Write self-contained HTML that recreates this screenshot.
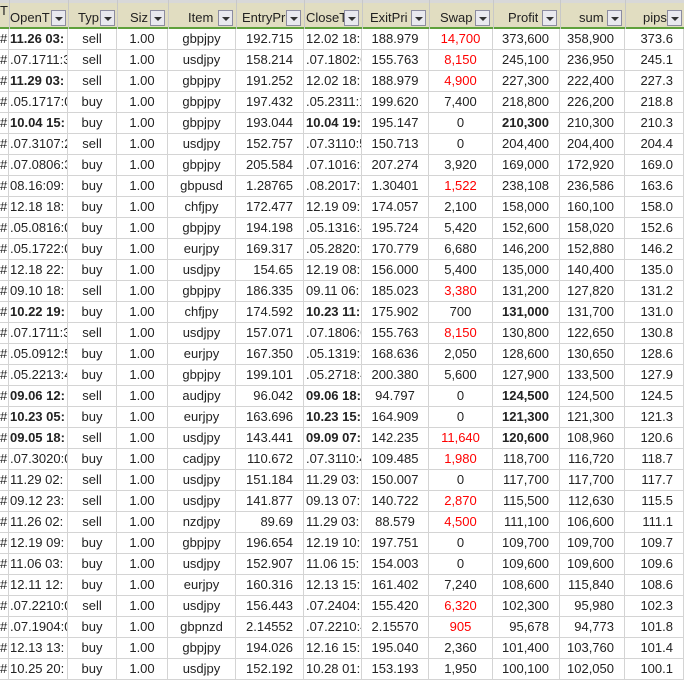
<!DOCTYPE html>
<html><head><meta charset="utf-8"><style>
body{margin:0;background:#fff;width:684px;height:678px;overflow:hidden;font-family:"Liberation Sans",sans-serif;font-size:13px;color:#222}
.g{display:grid;grid-template-columns:9px 59px 49px 51px 68px 68px 58px 67px 64px 67px 65px 59px;width:684px}
.g div{box-sizing:border-box;height:21px;line-height:20px;border-right:1px solid #d4d4d4;border-bottom:1px solid #d4d4d4;overflow:hidden;white-space:nowrap;padding:0 2px}
.g div.o{padding:0 0 0 1px}
.g div.h0{padding:0;text-align:left}
.c{text-align:center}.r{text-align:right;padding-right:10px!important}.l{text-align:left}
.red{color:#f00}.b{font-weight:bold}
.hd{position:relative;height:29px;background:#e1ddc1;border-top:3px solid #d8d8d8;box-sizing:border-box;border-bottom:2px solid #5fa03c}
.hd span{position:absolute;top:7px;font-size:13px;color:#222;white-space:nowrap;overflow:hidden}
.bt{position:absolute;top:7px;width:15px;height:16px;background:#e9e9ef;border:1px solid #8c8ca0;box-sizing:border-box}
.bt:after{content:"";position:absolute;left:3px;top:6px;border-left:4px solid transparent;border-right:4px solid transparent;border-top:4px solid #333}
.vl{position:absolute;top:-3px;bottom:-2px;width:1px;background:#c8c8c8}
</style></head><body>
<div class="hd">
<div class="vl" style="left:9px"></div><div class="vl" style="left:68px"></div><div class="vl" style="left:117px"></div><div class="vl" style="left:168px"></div><div class="vl" style="left:236px"></div><div class="vl" style="left:304px"></div><div class="vl" style="left:362px"></div><div class="vl" style="left:429px"></div><div class="vl" style="left:493px"></div><div class="vl" style="left:560px"></div><div class="vl" style="left:625px"></div>
<span style="left:0;top:0px;width:9px">T</span>
<span style="left:10px;width:42px">OpenT</span><div class="bt" style="left:51px"></div>
<span style="left:78px">Typ</span><div class="bt" style="left:100px"></div>
<span style="left:130px">Siz</span><div class="bt" style="left:150px"></div>
<span style="left:188px">Item</span><div class="bt" style="left:218px"></div>
<span style="left:242px;width:44px">EntryPri</span><div class="bt" style="left:286px"></div>
<span style="left:306px;width:38px">CloseT</span><div class="bt" style="left:344px"></div>
<span style="left:370px;width:41px">ExitPri</span><div class="bt" style="left:411px"></div>
<span style="left:440px;width:35px">Swap</span><div class="bt" style="left:475px"></div>
<span style="left:508px">Profit</span><div class="bt" style="left:542px"></div>
<span style="left:579px">sum</span><div class="bt" style="left:607px"></div>
<span style="left:643px">pips</span><div class="bt" style="left:667px"></div>
</div>
<div class="g" id="g">
<div class="h0">#</div><div class="o b">11.26 03:</div><div class="c">sell</div><div class="c">1.00</div><div class="c">gbpjpy</div><div class="r">192.715</div><div class="l">12.02 18:</div><div class="c">188.979</div><div class="c red">14,700</div><div class="r">373,600</div><div class="r">358,900</div><div class="r">373.6</div>
<div class="h0">#</div><div class="o">.07.1711:3</div><div class="c">sell</div><div class="c">1.00</div><div class="c">usdjpy</div><div class="r">158.214</div><div class="l">.07.1802:0</div><div class="c">155.763</div><div class="c red">8,150</div><div class="r">245,100</div><div class="r">236,950</div><div class="r">245.1</div>
<div class="h0">#</div><div class="o b">11.29 03:</div><div class="c">sell</div><div class="c">1.00</div><div class="c">gbpjpy</div><div class="r">191.252</div><div class="l">12.02 18:</div><div class="c">188.979</div><div class="c red">4,900</div><div class="r">227,300</div><div class="r">222,400</div><div class="r">227.3</div>
<div class="h0">#</div><div class="o">.05.1717:0</div><div class="c">buy</div><div class="c">1.00</div><div class="c">gbpjpy</div><div class="r">197.432</div><div class="l">.05.2311:1</div><div class="c">199.620</div><div class="c">7,400</div><div class="r">218,800</div><div class="r">226,200</div><div class="r">218.8</div>
<div class="h0">#</div><div class="o b">10.04 15:</div><div class="c">buy</div><div class="c">1.00</div><div class="c">gbpjpy</div><div class="r">193.044</div><div class="l b">10.04 19:</div><div class="c">195.147</div><div class="c">0</div><div class="r b">210,300</div><div class="r">210,300</div><div class="r">210.3</div>
<div class="h0">#</div><div class="o">.07.3107:2</div><div class="c">sell</div><div class="c">1.00</div><div class="c">usdjpy</div><div class="r">152.757</div><div class="l">.07.3110:5</div><div class="c">150.713</div><div class="c">0</div><div class="r">204,400</div><div class="r">204,400</div><div class="r">204.4</div>
<div class="h0">#</div><div class="o">.07.0806:3</div><div class="c">buy</div><div class="c">1.00</div><div class="c">gbpjpy</div><div class="r">205.584</div><div class="l">.07.1016:3</div><div class="c">207.274</div><div class="c">3,920</div><div class="r">169,000</div><div class="r">172,920</div><div class="r">169.0</div>
<div class="h0">#</div><div class="o">08.16:09:</div><div class="c">buy</div><div class="c">1.00</div><div class="c">gbpusd</div><div class="r">1.28765</div><div class="l">.08.2017:5</div><div class="c">1.30401</div><div class="c red">1,522</div><div class="r">238,108</div><div class="r">236,586</div><div class="r">163.6</div>
<div class="h0">#</div><div class="o">12.18 18:</div><div class="c">buy</div><div class="c">1.00</div><div class="c">chfjpy</div><div class="r">172.477</div><div class="l">12.19 09:</div><div class="c">174.057</div><div class="c">2,100</div><div class="r">158,000</div><div class="r">160,100</div><div class="r">158.0</div>
<div class="h0">#</div><div class="o">.05.0816:0</div><div class="c">buy</div><div class="c">1.00</div><div class="c">gbpjpy</div><div class="r">194.198</div><div class="l">.05.1316:4</div><div class="c">195.724</div><div class="c">5,420</div><div class="r">152,600</div><div class="r">158,020</div><div class="r">152.6</div>
<div class="h0">#</div><div class="o">.05.1722:0</div><div class="c">buy</div><div class="c">1.00</div><div class="c">eurjpy</div><div class="r">169.317</div><div class="l">.05.2820:3</div><div class="c">170.779</div><div class="c">6,680</div><div class="r">146,200</div><div class="r">152,880</div><div class="r">146.2</div>
<div class="h0">#</div><div class="o">12.18 22:</div><div class="c">buy</div><div class="c">1.00</div><div class="c">usdjpy</div><div class="r">154.65</div><div class="l">12.19 08:</div><div class="c">156.000</div><div class="c">5,400</div><div class="r">135,000</div><div class="r">140,400</div><div class="r">135.0</div>
<div class="h0">#</div><div class="o">09.10 18:</div><div class="c">sell</div><div class="c">1.00</div><div class="c">gbpjpy</div><div class="r">186.335</div><div class="l">09.11 06:</div><div class="c">185.023</div><div class="c red">3,380</div><div class="r">131,200</div><div class="r">127,820</div><div class="r">131.2</div>
<div class="h0">#</div><div class="o b">10.22 19:</div><div class="c">buy</div><div class="c">1.00</div><div class="c">chfjpy</div><div class="r">174.592</div><div class="l b">10.23 11:</div><div class="c">175.902</div><div class="c">700</div><div class="r b">131,000</div><div class="r">131,700</div><div class="r">131.0</div>
<div class="h0">#</div><div class="o">.07.1711:3</div><div class="c">sell</div><div class="c">1.00</div><div class="c">usdjpy</div><div class="r">157.071</div><div class="l">.07.1806:0</div><div class="c">155.763</div><div class="c red">8,150</div><div class="r">130,800</div><div class="r">122,650</div><div class="r">130.8</div>
<div class="h0">#</div><div class="o">.05.0912:5</div><div class="c">buy</div><div class="c">1.00</div><div class="c">eurjpy</div><div class="r">167.350</div><div class="l">.05.1319:3</div><div class="c">168.636</div><div class="c">2,050</div><div class="r">128,600</div><div class="r">130,650</div><div class="r">128.6</div>
<div class="h0">#</div><div class="o">.05.2213:4</div><div class="c">buy</div><div class="c">1.00</div><div class="c">gbpjpy</div><div class="r">199.101</div><div class="l">.05.2718:4</div><div class="c">200.380</div><div class="c">5,600</div><div class="r">127,900</div><div class="r">133,500</div><div class="r">127.9</div>
<div class="h0">#</div><div class="o b">09.06 12:</div><div class="c">sell</div><div class="c">1.00</div><div class="c">audjpy</div><div class="r">96.042</div><div class="l b">09.06 18:</div><div class="c">94.797</div><div class="c">0</div><div class="r b">124,500</div><div class="r">124,500</div><div class="r">124.5</div>
<div class="h0">#</div><div class="o b">10.23 05:</div><div class="c">buy</div><div class="c">1.00</div><div class="c">eurjpy</div><div class="r">163.696</div><div class="l b">10.23 15:</div><div class="c">164.909</div><div class="c">0</div><div class="r b">121,300</div><div class="r">121,300</div><div class="r">121.3</div>
<div class="h0">#</div><div class="o b">09.05 18:</div><div class="c">sell</div><div class="c">1.00</div><div class="c">usdjpy</div><div class="r">143.441</div><div class="l b">09.09 07:</div><div class="c">142.235</div><div class="c red">11,640</div><div class="r b">120,600</div><div class="r">108,960</div><div class="r">120.6</div>
<div class="h0">#</div><div class="o">.07.3020:0</div><div class="c">buy</div><div class="c">1.00</div><div class="c">cadjpy</div><div class="r">110.672</div><div class="l">.07.3110:4</div><div class="c">109.485</div><div class="c red">1,980</div><div class="r">118,700</div><div class="r">116,720</div><div class="r">118.7</div>
<div class="h0">#</div><div class="o">11.29 02:</div><div class="c">sell</div><div class="c">1.00</div><div class="c">usdjpy</div><div class="r">151.184</div><div class="l">11.29 03:</div><div class="c">150.007</div><div class="c">0</div><div class="r">117,700</div><div class="r">117,700</div><div class="r">117.7</div>
<div class="h0">#</div><div class="o">09.12 23:</div><div class="c">sell</div><div class="c">1.00</div><div class="c">usdjpy</div><div class="r">141.877</div><div class="l">09.13 07:</div><div class="c">140.722</div><div class="c red">2,870</div><div class="r">115,500</div><div class="r">112,630</div><div class="r">115.5</div>
<div class="h0">#</div><div class="o">11.26 02:</div><div class="c">sell</div><div class="c">1.00</div><div class="c">nzdjpy</div><div class="r">89.69</div><div class="l">11.29 03:</div><div class="c">88.579</div><div class="c red">4,500</div><div class="r">111,100</div><div class="r">106,600</div><div class="r">111.1</div>
<div class="h0">#</div><div class="o">12.19 09:</div><div class="c">buy</div><div class="c">1.00</div><div class="c">gbpjpy</div><div class="r">196.654</div><div class="l">12.19 10:</div><div class="c">197.751</div><div class="c">0</div><div class="r">109,700</div><div class="r">109,700</div><div class="r">109.7</div>
<div class="h0">#</div><div class="o">11.06 03:</div><div class="c">buy</div><div class="c">1.00</div><div class="c">usdjpy</div><div class="r">152.907</div><div class="l">11.06 15:</div><div class="c">154.003</div><div class="c">0</div><div class="r">109,600</div><div class="r">109,600</div><div class="r">109.6</div>
<div class="h0">#</div><div class="o">12.11 12:</div><div class="c">buy</div><div class="c">1.00</div><div class="c">eurjpy</div><div class="r">160.316</div><div class="l">12.13 15:</div><div class="c">161.402</div><div class="c">7,240</div><div class="r">108,600</div><div class="r">115,840</div><div class="r">108.6</div>
<div class="h0">#</div><div class="o">.07.2210:0</div><div class="c">sell</div><div class="c">1.00</div><div class="c">usdjpy</div><div class="r">156.443</div><div class="l">.07.2404:1</div><div class="c">155.420</div><div class="c red">6,320</div><div class="r">102,300</div><div class="r">95,980</div><div class="r">102.3</div>
<div class="h0">#</div><div class="o">.07.1904:0</div><div class="c">buy</div><div class="c">1.00</div><div class="c">gbpnzd</div><div class="r">2.14552</div><div class="l">.07.2210:4</div><div class="c">2.15570</div><div class="c red">905</div><div class="r">95,678</div><div class="r">94,773</div><div class="r">101.8</div>
<div class="h0">#</div><div class="o">12.13 13:</div><div class="c">buy</div><div class="c">1.00</div><div class="c">gbpjpy</div><div class="r">194.026</div><div class="l">12.16 15:</div><div class="c">195.040</div><div class="c">2,360</div><div class="r">101,400</div><div class="r">103,760</div><div class="r">101.4</div>
<div class="h0">#</div><div class="o">10.25 20:</div><div class="c">buy</div><div class="c">1.00</div><div class="c">usdjpy</div><div class="r">152.192</div><div class="l">10.28 01:</div><div class="c">153.193</div><div class="c">1,950</div><div class="r">100,100</div><div class="r">102,050</div><div class="r">100.1</div>
</div>
</body></html>
